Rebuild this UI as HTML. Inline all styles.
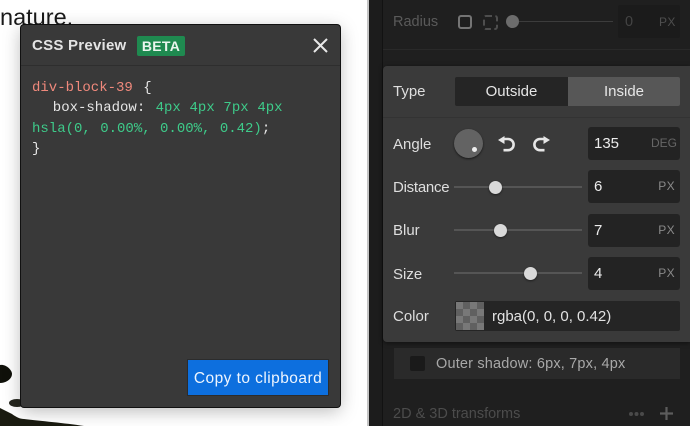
<!DOCTYPE html>
<html>
<head>
<meta charset="utf-8">
<style>
html,body{margin:0;padding:0;width:690px;height:426px;overflow:hidden;background:#fff;font-family:"Liberation Sans",sans-serif}
.a{position:absolute}
#root{position:relative;width:690px;height:426px;overflow:hidden;background:#fff}
.lbl{color:#dedede;font-size:15px;line-height:18px}
.inp{position:absolute;left:588px;width:92px;height:33px;background:#232323;border-radius:3px}
.inp .v{position:absolute;left:6px;top:8px;font-size:15px;line-height:18px;color:#ececec}
.inp .u{position:absolute;right:5px;top:8px;font-size:12px;line-height:16px;color:#8a8a8a;letter-spacing:.4px}
.track{position:absolute;left:454px;width:128px;height:2px;background:#555}
.thumb{position:absolute;width:13px;height:13px;border-radius:50%;background:#d9d9d9;box-shadow:0 1px 2px rgba(0,0,0,.5)}
.mono{font-family:"Liberation Mono",monospace;font-size:14px;line-height:20.3px;white-space:pre;color:#e6e6e6;word-spacing:2px}
.g{color:#3ecb8a}.r{color:#f0897c}
</style>
</head>
<body>
<div id="root">
  <!-- left page -->
  <div class="a" style="left:0;top:3px;font-size:23.5px;line-height:28px;color:#1a1a1a">nature.</div>
  <svg class="a" style="left:0;top:355px" width="100" height="71" viewBox="0 0 100 71">
    <path d="M0 10 C6 9 12 15 12 19 C12 24 6 28 0 28 Z" fill="#10110a"/>
    <ellipse cx="17" cy="48" rx="8" ry="4" fill="#26271f"/>
    <path d="M0 53 C4 55 8 57 12 59 C16 62 20 64 24 64 C40 66 65 68 84 71 L0 71 Z" fill="#1a1b10"/>
  </svg>

  <!-- modal -->
  <div class="a" style="left:21px;top:25px;width:319px;height:382px;background:#393939;border-radius:3px;box-shadow:0 0 0 1px #111,0 4px 18px rgba(0,0,0,.28)"></div>
  <div class="a" style="left:21px;top:65px;width:319px;height:1px;background:#2e2e2e"></div>
  <div class="a" style="left:32px;top:37px;font-size:15px;line-height:18px;font-weight:bold;color:#e4e4e4;letter-spacing:.25px">CSS Preview</div>
  <div class="a" style="left:137px;top:36px;width:48px;height:20px;background:#1f8a50;border-radius:2px;color:#eaf5ee;font-size:14px;line-height:20px;font-weight:bold;text-align:center;letter-spacing:.3px">BETA</div>
  <svg class="a" style="left:313px;top:38px" width="15" height="15" viewBox="0 0 15 15"><path d="M1 1 L14 14 M14 1 L1 14" stroke="#e8e8e8" stroke-width="2" fill="none"/></svg>
  <div class="a mono" style="left:32px;top:78px"><span class="r">div-block-39</span> {
  box-shadow: <span class="g" style="word-spacing:.3px">4px 4px 7px 4px</span>
<span class="g" style="word-spacing:1px">hsla(0, 0.00%, 0.00%, 0.42)</span>;
}</div>
  <div class="a" style="left:188px;top:360px;width:140px;height:35px;background:#0d6fde;box-shadow:0 0 0 1px #2c2c2c;color:#eef5fe;font-size:15.5px;line-height:37px;text-align:center;letter-spacing:.45px;white-space:nowrap">Copy to clipboard</div>

  <!-- right panel -->
  <div class="a" style="left:367px;top:0;width:2px;height:426px;background:#c4c4c4"></div>
  <div class="a" style="left:369px;top:0;width:321px;height:426px;background:#1f1f1f"></div>
  <div class="a" style="left:369px;top:0;width:13px;height:426px;background:#1c1c1c"></div>
  <div class="a" style="left:382px;top:0;width:1px;height:426px;background:#121212"></div>
  <div class="a" style="left:383px;top:49px;width:307px;height:1px;background:#292929"></div>
  <div class="a" style="left:393px;top:13px;font-size:14.5px;line-height:18px;color:#5a5a5a">Radius</div>
  <div class="a" style="left:458px;top:15px;width:10px;height:10px;border:2.5px solid #747474;border-radius:3px"></div>
  <div class="a" style="left:483px;top:15px;width:11px;height:11px;border:2px dashed #4e4e4e;border-radius:3px"></div>
  <div class="a" style="left:506px;top:15px;width:13px;height:13px;border-radius:50%;background:#6c6c6c"></div>
  <div class="a" style="left:519px;top:21px;width:94px;height:1px;background:#3c3c3c"></div>
  <div class="a" style="left:618px;top:5px;width:62px;height:33px;background:#1b1b1b;border-radius:2px"></div>
  <div class="a" style="left:625px;top:13px;font-size:14.5px;line-height:18px;color:#444">0</div>
  <div class="a" style="left:659px;top:14px;font-size:12px;line-height:16px;color:#4e4e4e;letter-spacing:.4px">PX</div>

  <!-- popup -->
  <div class="a" style="left:383px;top:66px;width:307px;height:276px;background:#3a3a3a;border-radius:4px 0 0 4px;box-shadow:0 1px 5px rgba(0,0,0,.5)"></div>
  <div class="a" style="left:383px;top:117px;width:307px;height:1px;background:#333"></div>
  <div class="a lbl" style="left:393px;top:83px">Type</div>
  <div class="a" style="left:455px;top:77px;width:113px;height:29px;background:#252525;border-radius:2px 0 0 2px;color:#e6e6e6;font-size:15px;line-height:30px;text-align:center">Outside</div>
  <div class="a" style="left:568px;top:77px;width:112px;height:29px;background:#575757;border-radius:0 2px 2px 0;color:#e6e6e6;font-size:15px;line-height:30px;text-align:center">Inside</div>

  <div class="a lbl" style="left:393px;top:136px">Angle</div>
  <div class="a" style="left:454px;top:129px;width:29px;height:29px;border-radius:50%;background:#636363;box-shadow:0 1px 2px rgba(0,0,0,.6)"></div>
  <div class="a" style="left:472px;top:147px;width:5px;height:5px;border-radius:50%;background:#eee"></div>
  <svg class="a" style="left:497px;top:134px" width="20" height="20" viewBox="0 0 20 20"><path d="M6 5 H11 A5.6 5.6 0 1 1 11 16.2 H6.5" stroke="#e6e6e6" stroke-width="2.6" fill="none"/><path d="M1 6 L7.5 2 V10 Z" fill="#e6e6e6"/></svg>
  <svg class="a" style="left:531px;top:134px" width="20" height="20" viewBox="0 0 20 20"><path d="M14 5 H9 A5.6 5.6 0 1 0 9 16.2 H13.5" stroke="#e6e6e6" stroke-width="2.6" fill="none"/><path d="M19 6 L12.5 2 V10 Z" fill="#e6e6e6"/></svg>
  <div class="inp" style="top:127px"><span class="v">135</span><span class="u" style="color:#666;right:3px;letter-spacing:0">DEG</span></div>

  <div class="a lbl" style="left:393px;top:179px;letter-spacing:-.25px">Distance</div>
  <div class="track" style="top:186px"></div>
  <div class="thumb" style="left:489px;top:181px"></div>
  <div class="inp" style="top:170px"><span class="v">6</span><span class="u">PX</span></div>

  <div class="a lbl" style="left:393px;top:222px">Blur</div>
  <div class="track" style="top:229px"></div>
  <div class="thumb" style="left:494px;top:224px"></div>
  <div class="inp" style="top:214px"><span class="v">7</span><span class="u">PX</span></div>

  <div class="a lbl" style="left:393px;top:266px">Size</div>
  <div class="track" style="top:272px"></div>
  <div class="thumb" style="left:524px;top:267px"></div>
  <div class="inp" style="top:257px"><span class="v">4</span><span class="u">PX</span></div>

  <div class="a lbl" style="left:393px;top:308px">Color</div>
  <div class="a" style="left:455px;top:301px;width:225px;height:30px;background:#252525;border-radius:2px"></div>
  <div class="a" style="left:456px;top:302px;width:28px;height:28px;background-color:#787878;background-image:linear-gradient(45deg,#606060 25%,transparent 25%,transparent 75%,#606060 75%),linear-gradient(45deg,#606060 25%,transparent 25%,transparent 75%,#606060 75%);background-size:14px 14px;background-position:0 0,7px 7px"></div>
  <div class="a" style="left:492px;top:308px;font-size:15px;line-height:18px;color:#e2e2e2;letter-spacing:0">rgba(0, 0, 0, 0.42)</div>

  <!-- below popup -->
  <div class="a" style="left:394px;top:348px;width:286px;height:31px;background:#2a2a2a"></div>
  <div class="a" style="left:410px;top:356px;width:15px;height:15px;background:#1a1a1a;border-radius:2px"></div>
  <div class="a" style="left:436px;top:355px;font-size:14.5px;line-height:18px;color:#a8a8a8;letter-spacing:.18px">Outer shadow: 6px, 7px, 4px</div>
  <div class="a" style="left:393px;top:405px;font-size:14.5px;line-height:18px;color:#4c4c4c">2D &amp; 3D transforms</div>
  <div class="a" style="left:629px;top:412px;width:4px;height:4px;border-radius:50%;background:#4a4a4a;box-shadow:5.5px 0 0 #4a4a4a,11px 0 0 #4a4a4a"></div>
  <svg class="a" style="left:660px;top:407px" width="13" height="13" viewBox="0 0 13 13"><path d="M6.5 0 V13 M0 6.5 H13" stroke="#5c5c5c" stroke-width="2.2"/></svg>
</div>
</body>
</html>
